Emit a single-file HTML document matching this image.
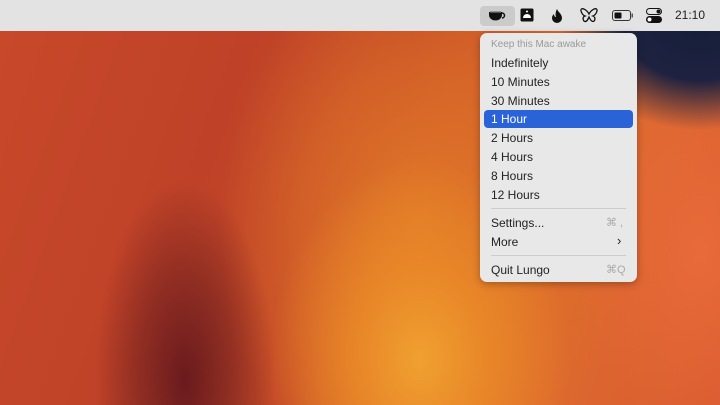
<!DOCTYPE html>
<html><head><style>
*{margin:0;padding:0;box-sizing:border-box}
body{width:720px;height:405px;overflow:hidden;position:relative;font-family:"Liberation Sans",sans-serif;
background:
radial-gradient(ellipse 150px 200px at 420px 360px,#f0a030 0%,rgba(235,140,40,.8) 45%,rgba(230,120,40,0) 100%),
radial-gradient(ellipse 90px 200px at 185px 380px,#6a1a1e 0%,rgba(110,30,30,.6) 50%,rgba(110,30,30,0) 100%),
radial-gradient(ellipse 200px 280px at 420px 230px,#e07828 0%,rgba(220,110,40,.6) 60%,rgba(220,110,40,0) 100%),
radial-gradient(ellipse 120px 200px at 700px 250px,#e86a3a 0%,rgba(230,100,60,0) 100%),
linear-gradient(110deg,#c8482a 0%,#bf4228 30%,#c44a28 50%,#e0702e 70%,#d85a30 100%);}
.dark{position:absolute;left:520px;top:0px;width:260px;height:200px;background:radial-gradient(ellipse 140px 110px at 180px 20px,#141e38 0%,#1e2240 55%,rgba(60,30,50,0) 100%)}
.bar{position:absolute;left:0;top:0;width:720px;height:31px;background:#e3e3e3}
.menu{position:absolute;left:480px;top:33px;width:157px;height:249px;background:#e8e8e8;border-radius:7px;box-shadow:0 2px 8px rgba(0,0,0,.3);font-size:12px;color:#222}
.it{position:absolute;left:11px}
.hl{position:absolute;left:4px;top:77px;width:149px;height:18px;background:#2a63d8;border-radius:4px}
.sep{position:absolute;left:11px;width:135px;height:1px;background:#ccc}
.k{position:absolute;color:#aaa;font-size:11px}
</style></head><body>
<div class="dark"></div>
<div class="bar">
<div style="position:absolute;left:480px;top:6px;width:35px;height:20px;background:#cbcbcb;border-radius:4px"></div>
<svg style="position:absolute;left:488px;top:9px" width="18" height="14"><path d="M1 3h13v3a6 5 0 0 1-13 0z" fill="#111"/><path d="M14 4a2.5 2.5 0 0 1 0 5" stroke="#111" fill="none" stroke-width="1.5"/><rect x="2" y="2.5" width="11" height="1.5" fill="#555"/></svg>
<svg style="position:absolute;left:520px;top:8px" width="14" height="14"><rect x="0.5" y="0.5" width="13" height="13" rx="1.5" fill="#111"/><path d="M3 10a4 4 0 0 1 8 0z" fill="#fff"/><circle cx="7" cy="3.5" r="1" fill="#fff"/></svg>
<svg style="position:absolute;left:551px;top:8px" width="12" height="15"><path d="M6 1c1 3 5 5 5 9a5 5 0 0 1-10 0c0-2 1-3 2-4 0 2 1 3 2 3-1-3 0-6 1-8z" fill="#111"/></svg>
<svg style="position:absolute;left:580px;top:8px" width="18" height="15"><path d="M9 6C7 2 3 0 1.5 1S2 7 5 8c-3 1-2 5 0 5.5S8 11 9 9c1 2 2 4.5 4 4.5s3-4.5 0-5.5c3-1 5-6 3.5-7S11 2 9 6z" fill="none" stroke="#111" stroke-width="1.3"/></svg>
<svg style="position:absolute;left:612px;top:10px" width="22" height="11"><rect x="0.5" y="0.5" width="18" height="10" rx="2.5" fill="none" stroke="#333"/><rect x="2.5" y="2.5" width="7" height="6" rx="1" fill="#111"/><rect x="19.5" y="3.5" width="1.5" height="4" fill="#555"/></svg>
<svg style="position:absolute;left:646px;top:8px" width="16" height="15"><rect x="0.5" y="0.5" width="15" height="6" rx="3" fill="none" stroke="#111"/><circle cx="12.5" cy="3.5" r="2" fill="#111"/><rect x="0" y="8" width="16" height="7" rx="3.5" fill="#111"/><circle cx="3.5" cy="11.5" r="2" fill="#fff"/></svg>
<div style="position:absolute;left:675px;top:8px;font-size:12px;color:#222">21:10</div>
</div>
<div class="menu">
<div class="it" style="top:6px;font-size:10px;color:#9a9a9a">Keep this Mac awake</div>
<div class="it" style="top:23px">Indefinitely</div>
<div class="it" style="top:42px">10 Minutes</div>
<div class="it" style="top:61px">30 Minutes</div>
<div class="hl"></div>
<div class="it" style="top:79px;color:#fff">1 Hour</div>
<div class="it" style="top:98px">2 Hours</div>
<div class="it" style="top:117px">4 Hours</div>
<div class="it" style="top:136px">8 Hours</div>
<div class="it" style="top:155px">12 Hours</div>
<div class="sep" style="top:175px"></div>
<div class="it" style="top:183px">Settings...</div>
<div class="k" style="left:126px;top:183px">⌘ ,</div>
<div class="it" style="top:202px">More</div>
<div class="k" style="left:137px;top:200px;color:#222;font-size:13px">›</div>
<div class="sep" style="top:222px"></div>
<div class="it" style="top:230px">Quit Lungo</div>
<div class="k" style="left:126px;top:230px">⌘Q</div>
</div>
</body></html>
